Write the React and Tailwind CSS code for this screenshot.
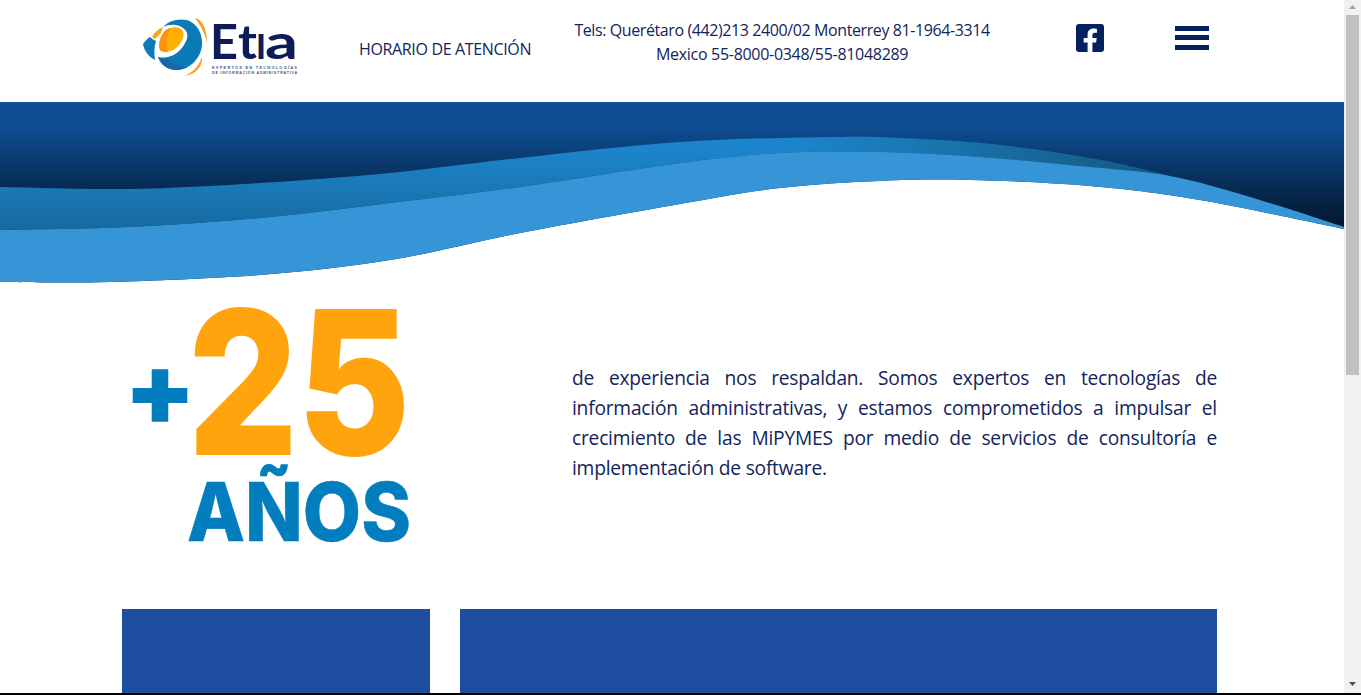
import React from 'react'
import { FaFacebookSquare } from 'react-icons/fa'

// catmull-rom through the points, used for the wave edges
function curve(pts, move = true) {
  let d = move ? `M${pts[0][0]} ${pts[0][1]}` : `L${pts[0][0]} ${pts[0][1]}`
  for (let i = 0; i < pts.length - 1; i++) {
    const p0 = pts[i - 1] || pts[i]
    const p1 = pts[i]
    const p2 = pts[i + 1]
    const p3 = pts[i + 2] || p2
    const c1x = p1[0] + (p2[0] - p0[0]) / 6
    const c1y = p1[1] + (p2[1] - p0[1]) / 6
    const c2x = p2[0] - (p3[0] - p1[0]) / 6
    const c2y = p2[1] - (p3[1] - p1[1]) / 6
    d += ` C${c1x} ${c1y} ${c2x} ${c2y} ${p2[0]} ${p2[1]}`
  }
  return d
}

const midTop = [[0, 85], [130, 87], [260, 81], [390, 71], [520, 56], [680, 40], [830, 35], [900, 36], [1000, 43], [1100, 58], [1170, 74]]
const lightTop = [[0, 128], [130, 125], [260, 116], [390, 101], [520, 85], [680, 61], [780, 51], [880, 50], [980, 55], [1090, 65], [1170, 74], [1250, 95], [1344, 125]]
const lightBottom = [[1344, 127], [1200, 98], [1090, 84], [970, 78], [880, 79], [780, 86], [680, 102], [520, 131], [390, 158], [260, 173], [110, 180], [0, 180]]

function Logo() {
  const letter = { fontFamily: 'Lato, sans-serif', fontSize: 48, fontWeight: 700, fill: '#0d1c55', lengthAdjust: 'spacingAndGlyphs' }
  return (
    <svg viewBox="143 18 155 58" className="w-[155px] h-[58px]">
      {/* blue crescent */}
      <path d="M163 27 C168 21 178 18 187 20 C197 23 203 34 202 45 C201 58 190 70 176 70 C168 70 161 65 158 57 C166 59 175 56 181 49 C187 42 189 35 186 31 C181 24 171 23 163 27Z" fill="#0a7bb6" />
      <path d="M158 57 C161 59 165 59 168 59 C172 63 179 67 188 67 C184 69 180 70 176 70 C168 70 161 65 158 57Z" fill="#1b64a6" />
      {/* yellow inner */}
      <path d="M165 31 C171 26 180 26 183 31 C185 37 181 44 175 49 C170 52 163 53 160 50 C158 44 160 36 165 31Z" fill="#ffb000" />
      <path d="M165 31 C167 29 169 28 171 28 C167 34 165 44 168 52 C165 52 162 52 160 50 C158 44 160 36 165 31Z" fill="#fb9212" />
      {/* left wedge */}
      <path d="M150 37 C152 39 154 40 156 41 C154 47 154 53 155 60 C149 57 144 51 143 44 C145 41 147 39 150 37Z" fill="#0a7bb6" />
      {/* orange arcs */}
      <path d="M152 37 C154 33 158 29 163 27 L161 33 C159 35 157 37 155 39Z" fill="#fba21a" />
      <path d="M195 18 C202 19 207 28 207 43 C205 33 200 25 195 18Z" fill="#fba21a" />
      <path d="M183 76 C192 74 198 67 202 57 C203 66 196 75 183 76Z" fill="#fba21a" />
      <text x="210" y="59" textLength="28" {...letter}>E</text>
      <text x="238" y="59" textLength="19" {...letter}>t</text>
      <text x="256" y="59" textLength="10" {...letter}>ı</text>
      <text x="265" y="59" textLength="33" {...letter}>a</text>
      <text x="212" y="68.500" fontFamily="'Liberation Sans', sans-serif" fontSize="4" fontWeight="700" fill="#4a5680" textLength="85" lengthAdjust="spacing">EXPERTOS EN TECNOLOGÍAS</text>
      <text x="212" y="73.500" fontFamily="'Liberation Sans', sans-serif" fontSize="3.600" fontWeight="700" fill="#4a5680" textLength="85" lengthAdjust="spacing">DE INFORMACIÓN ADMINISTRATIVA</text>
    </svg>
  )
}

function Wave() {
  const band = curve(midTop) + ' ' + curve([...lightTop].slice(0, 11).reverse(), false) + 'Z'
  const light = curve(lightTop) + ' ' + curve(lightBottom, false) + 'Z'
  const sky = 'M0 0 L1344 0 ' + curve(lightBottom, false) + 'Z'
  return (
    <svg viewBox="0 0 1344 181" preserveAspectRatio="none" className="block w-full h-[181px]">
      <defs>
        <linearGradient id="sky" gradientUnits="userSpaceOnUse" x1="0" y1="0" x2="0" y2="126">
          <stop offset="0" stopColor="#0f4f96" />
          <stop offset="0.2" stopColor="#0e4c92" />
          <stop offset="1" stopColor="#02152a" />
        </linearGradient>
        <linearGradient id="mid" gradientUnits="userSpaceOnUse" x1="0" y1="50" x2="0" y2="128">
          <stop offset="0" stopColor="#1c84ca" />
          <stop offset="1" stopColor="#166a9f" />
        </linearGradient>
        <linearGradient id="midRight" gradientUnits="userSpaceOnUse" x1="800" y1="0" x2="1170" y2="0">
          <stop offset="0" stopColor="#14597f" stopOpacity="0" />
          <stop offset="1" stopColor="#14597f" />
        </linearGradient>
      </defs>
      <path d={sky} fill="url(#sky)" />
      <path d={band} fill="url(#mid)" />
      <path d={band} fill="url(#midRight)" />
      <path d={light} fill="#3595d6" />
    </svg>
  )
}

function Anos() {
  return (
    <svg viewBox="122 300 300 250" className="w-[300px] h-[250px] shrink-0">
      <text x="124" y="425" fontFamily="Inter, sans-serif" fontSize="100" fontWeight="900" fill="#027dbd" textLength="72" lengthAdjust="spacingAndGlyphs">+</text>
      <text x="188" y="454" fontFamily="Inter, sans-serif" fontSize="198" fontWeight="800" fill="#ffa40c" stroke="#ffa40c" strokeWidth="2" textLength="222" lengthAdjust="spacingAndGlyphs">25</text>
      <text x="187" y="541" fontFamily="Inter, sans-serif" fontSize="81" fontWeight="800" fill="#027dbd" stroke="#027dbd" strokeWidth="0.5" textLength="224" lengthAdjust="spacingAndGlyphs">AÑOS</text>
    </svg>
  )
}

function Scrollbar() {
  return (
    <div className="w-[17px] shrink-0 bg-[#f1f1f1] flex flex-col items-center">
      <svg viewBox="0 0 7 4" className="w-[7px] h-[4px] mt-[5px] mb-[6px]"><path d="M3.500 0 L7 4 L0 4Z" fill="#a3a3a3" /></svg>
      <div className="w-[13px] h-[360px] bg-[#c1c1c1]" />
      <svg viewBox="0 0 7 4" className="w-[7px] h-[4px] mt-auto mb-[7px]"><path d="M0 0 L7 0 L3.500 4Z" fill="#505050" /></svg>
    </div>
  )
}

export default function App() {
  return (
    <div className="h-[695px] overflow-hidden flex flex-col bg-white border-b-2 border-black font-['Open_Sans',sans-serif] text-[#12245c]">
      <div className="flex flex-1 min-h-0">
        <div className="flex-1 min-w-0 flex flex-col">
          <header className="h-[102px] shrink-0 flex items-start">
            <div className="ml-[143px] mt-[18px]"><Logo /></div>
            <p className="ml-[61px] mt-[37px] text-[16px] leading-6 tracking-[-0.35px] whitespace-nowrap">HORARIO DE ATENCIÓN</p>
            <div className="ml-[43px] mt-[18px] w-[416px] text-center text-[16px] leading-6 whitespace-nowrap">
              <p className="tracking-[-0.4px]">Tels: Querétaro (442)213 2400/02 Monterrey 81-1964-3314</p>
              <p className="tracking-[-0.3px]">Mexico 55-8000-0348/55-81048289</p>
            </div>
            <FaFacebookSquare className="ml-[84px] mt-[22px] text-[#03205f]" size={32} />
            <div className="ml-[69px] mt-[26px] w-[34px] flex flex-col">
              <div className="h-[5px] bg-[#03205f]" />
              <div className="h-[5px] mt-[4px] bg-[#03205f]" />
              <div className="h-[5px] mt-[5px] bg-[#03205f]" />
            </div>
          </header>

          <Wave />

          <section className="h-[326px] shrink-0 ml-[122px] w-[1095px] pt-[17px] flex items-start">
            <Anos />
            <p className="ml-[150px] mt-[63px] w-[645px] text-[19.2px] leading-[30px] tracking-[-0.22px] text-justify">
              de experiencia nos respaldan. Somos expertos en tecnologías de información administrativas, y estamos comprometidos a impulsar el crecimiento de las MiPYMES por medio de servicios de consultoría e implementación de software.
            </p>
          </section>

          <div className="flex-1 ml-[122px] w-[1095px] flex gap-[30px]">
            <div className="w-[308px] bg-[#1f4ea1]" />
            <div className="flex-1 bg-[#1f4ea1]" />
          </div>
        </div>
        <Scrollbar />
      </div>
    </div>
  )
}
